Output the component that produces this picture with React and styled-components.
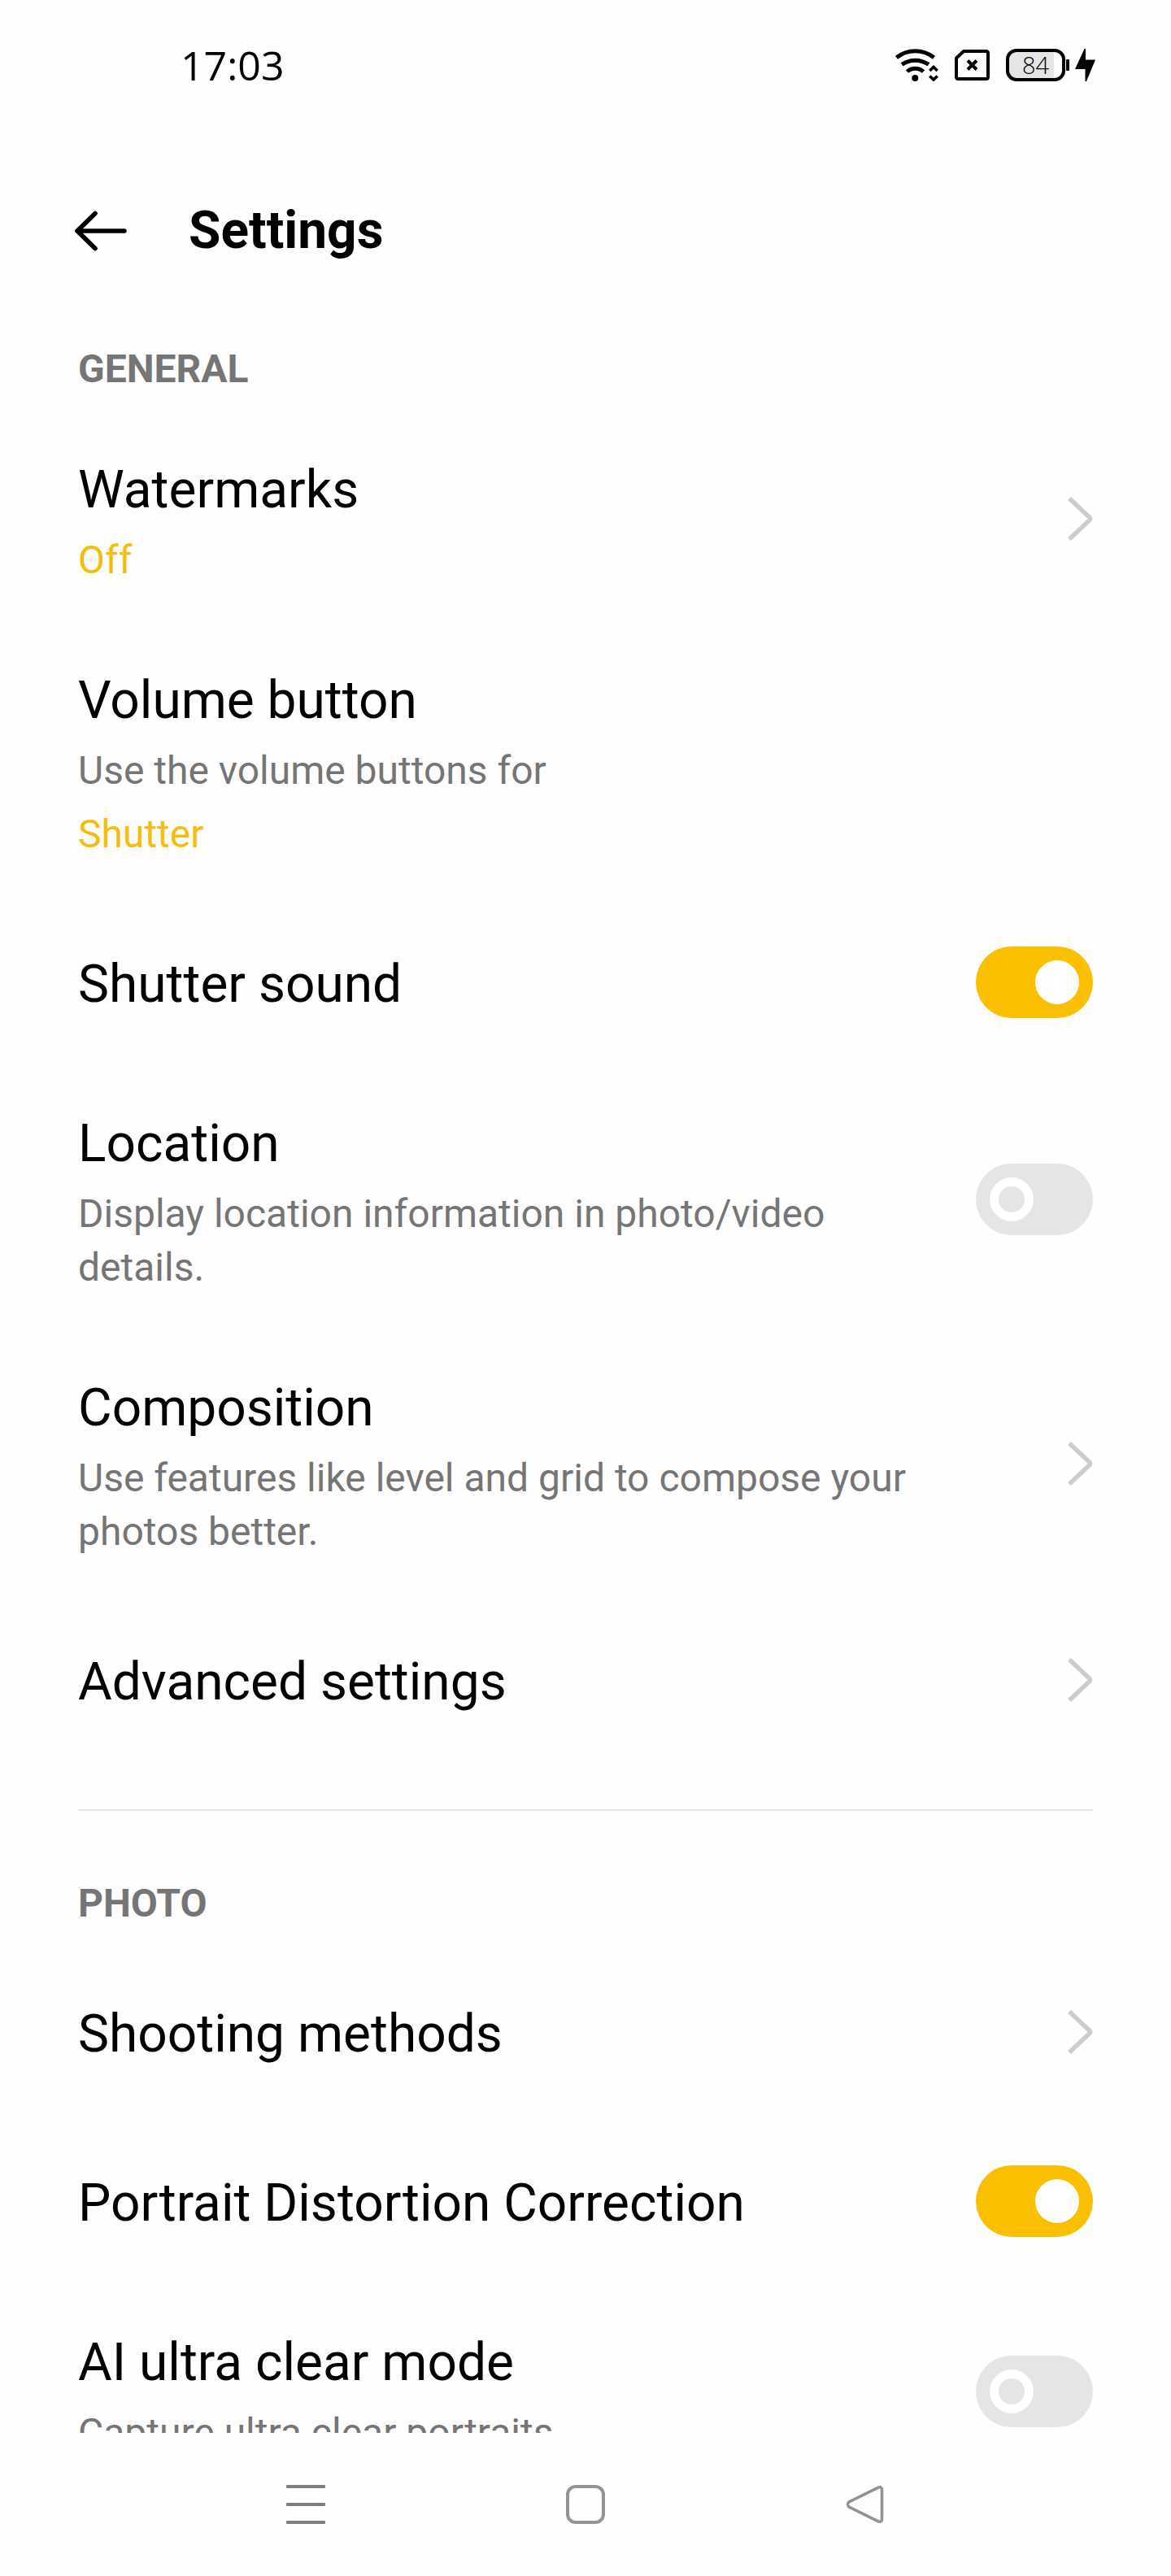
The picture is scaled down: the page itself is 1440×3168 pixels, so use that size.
import React, { useState } from "react"
import styled, { createGlobalStyle } from "styled-components"

const GlobalStyle = createGlobalStyle`
  *,
  *::before,
  *::after {
    box-sizing: border-box;
  }

  body {
    margin: 0;
    background: #fefefe;
    color: #000;
    font-family: Roboto, "Liberation Sans", sans-serif;
  }
`

const Screen = styled.div`
  display: flex;
  flex-direction: column;
  height: 100vh;
  overflow: hidden;
`

const StatusBar = styled.div`
  display: flex;
  flex: none;
  align-items: center;
  justify-content: space-between;
  height: 160px;
  padding: 0 93px 0 222px;
`

const Clock = styled.time`
  font-family: "Open Sans", "Noto Sans", sans-serif;
  font-size: 50px;
  line-height: 68px;
`

const StatusIcons = styled.div`
  display: flex;
  align-items: center;
  gap: 20px;

  svg {
    display: block;
  }
`

const Power = styled.div`
  display: flex;
  align-items: center;
  gap: 7px;
`

const Battery = styled.div`
  display: flex;
  align-items: center;
  gap: 1px;

  &::after {
    content: "";
    width: 4px;
    height: 14px;
    border-radius: 1px;
    background: #000;
  }
`

const BatteryCell = styled.div`
  width: 73px;
  height: 40px;
  border: 4px solid #000;
  border-radius: 13px;
  background: linear-gradient(to right, #e5e5e5 84%, transparent 84%);
  font-family: "Open Sans", "Noto Sans", sans-serif;
  font-size: 29px;
  font-weight: 300;
  line-height: 32px;
  text-align: center;
`

const Header = styled.header`
  display: flex;
  flex: none;
  align-items: center;
  gap: 76px;
  padding: 86px 92px 18px;
`

const IconButton = styled.button`
  display: flex;
  align-items: center;
  justify-content: center;
  padding: 0;
  border: 0;
  background: none;
  cursor: pointer;
`

const PageTitle = styled.h1`
  margin: 0;
  font-size: 64px;
  font-weight: 700;
  line-height: 76px;
`

const Content = styled.main`
  flex: 1;
  min-height: 0;
  padding: 0 96px;
  overflow: hidden;
`

const Section = styled.section`
  padding: 86px 0 52px;

  & + & {
    border-top: 2px solid #e5e5e5;
  }
`

const SectionTitle = styled.h2`
  margin: 0 0 29px;
  color: #757575;
  font-size: 48px;
  font-weight: 700;
  line-height: 56px;
  text-transform: uppercase;
`

const Row = styled.button`
  display: flex;
  align-items: center;
  justify-content: space-between;
  gap: 48px;
  width: 100%;
  min-height: 208px;
  padding: 54px 0;
  border: 0;
  background: none;
  color: inherit;
  font-family: inherit;
  text-align: left;
  cursor: pointer;
`

const RowText = styled.span`
  flex: 1;
  min-width: 0;
`

const RowTitle = styled.span`
  display: block;
  font-size: 64px;
  line-height: 76px;
`

const RowDetails = styled.span`
  display: flex;
  flex-direction: column;
  gap: 12px;
  margin: 15px 0 -6px;
  font-size: 48px;
  line-height: 66px;
`

const Description = styled.span`
  color: #757575;
`

const Value = styled.span`
  color: #f5bd0f;
`

const Control = styled.span`
  display: flex;
  flex: none;
  justify-content: flex-end;
  width: 144px;
  margin-bottom: 6px;
`

const Toggle = styled.input`
  display: flex;
  align-items: center;
  appearance: none;
  width: 144px;
  height: 88px;
  margin: 0;
  padding: 0 17px;
  border-radius: 44px;
  background: #e5e5e5;
  cursor: pointer;

  &::before {
    content: "";
    width: 54px;
    height: 54px;
    border: 11px solid #fff;
    border-radius: 50%;
  }

  &:checked {
    justify-content: flex-end;
    background: #fac000;
  }

  &:checked::before {
    background: #fff;
  }
`

const NavBar = styled.nav`
  display: flex;
  flex: none;
  height: 176px;
  padding: 0 204px;
`

const NavButton = styled(IconButton)`
  flex: 1;
`

const WifiIcon = () => (
  <svg width="53" height="40" viewBox="0 0 53 40" fill="none" stroke="#000" strokeWidth="5">
    <path d="M1.5 10.8A37 37 0 0 1 47.5 10.8" />
    <path d="M8 19.3A29 29 0 0 1 41 19.3" />
    <path d="M14.5 28A15 15 0 0 1 34.5 28" />
    <circle cx="24.3" cy="36" r="4" fill="#000" stroke="none" />
    <path d="M42.3 27L47 22.5L51.7 27M42.3 33.5L47 38L51.7 33.5" strokeWidth="3.6" />
  </svg>
)

const SimIcon = () => (
  <svg width="43" height="38" viewBox="0 0 43 38" fill="none" stroke="#000" strokeWidth="4">
    <path d="M11 2H38.5Q41 2 41 4.5V33.5Q41 36 38.5 36H4.5Q2 36 2 33.5V10.5Z" strokeLinejoin="round" />
    <path d="M16 13.5L27 24.5M27 13.5L16 24.5" />
  </svg>
)

const BoltIcon = () => (
  <svg width="25" height="40" viewBox="0 0 25 40">
    <path d="M11.5 0H13V13.5H25L14 40H12.5V25H0Z" />
  </svg>
)

const BackIcon = () => (
  <svg
    width="64"
    height="50"
    viewBox="0 0 64 50"
    fill="none"
    stroke="#000"
    strokeWidth="5.6"
    strokeLinecap="round"
    strokeLinejoin="round"
  >
    <path d="M61 25H3M25 3.5L3 25L25 46.5" />
  </svg>
)

const ChevronIcon = () => (
  <svg width="31" height="54" viewBox="0 0 31 54" fill="none" stroke="#ccc" strokeWidth="5.5">
    <path d="M2 2L26.5 25Q28.5 27 26.5 29L2 52" />
  </svg>
)

const MenuIcon = () => (
  <svg width="48" height="48" viewBox="0 0 48 48" fill="#7f7f7f">
    <rect width="48" height="4" rx="1" />
    <rect y="22" width="48" height="4" rx="1" />
    <rect y="44" width="48" height="4" rx="1" />
  </svg>
)

const HomeIcon = () => (
  <svg width="48" height="48" viewBox="0 0 48 48" fill="none" stroke="#939393" strokeWidth="4">
    <rect x="2" y="2" width="44" height="44" rx="10" />
  </svg>
)

const ReturnIcon = () => (
  <svg width="48" height="48" viewBox="0 0 48 48" fill="none" stroke="#939393" strokeWidth="3.6">
    <path d="M39.5 3.4L4 21Q0.8 24 4 27L39.5 44.6Q44.5 46.5 44.5 42V6Q44.5 1.5 39.5 3.4Z" />
  </svg>
)

const sections = [
  {
    title: "General",
    items: [
      { title: "Watermarks", value: "Off", link: true },
      { title: "Volume button", description: "Use the volume buttons for", value: "Shutter" },
      { title: "Shutter sound", toggle: true, on: true },
      {
        title: "Location",
        description: "Display location information in photo/video details.",
        toggle: true,
      },
      {
        title: "Composition",
        description: "Use features like level and grid to compose your photos better.",
        link: true,
      },
      { title: "Advanced settings", link: true },
    ],
  },
  {
    title: "Photo",
    items: [
      { title: "Shooting methods", link: true },
      { title: "Portrait Distortion Correction", toggle: true, on: true },
      { title: "AI ultra clear mode", description: "Capture ultra clear portraits", toggle: true },
    ],
  },
]

function SettingRow({ title, description, value, link, toggle, on = false }) {
  const [checked, setChecked] = useState(on)

  return (
    <Row as={toggle ? "label" : "button"}>
      <RowText>
        <RowTitle>{title}</RowTitle>
        {(description || value) && (
          <RowDetails>
            {description && <Description>{description}</Description>}
            {value && <Value>{value}</Value>}
          </RowDetails>
        )}
      </RowText>
      <Control>
        {link && <ChevronIcon />}
        {toggle && (
          <Toggle type="checkbox" checked={checked} onChange={() => setChecked(!checked)} />
        )}
      </Control>
    </Row>
  )
}

function App() {
  return (
    <Screen>
      <GlobalStyle />
      <StatusBar>
        <Clock>17:03</Clock>
        <StatusIcons>
          <WifiIcon />
          <SimIcon />
          <Power>
            <Battery>
              <BatteryCell>84</BatteryCell>
            </Battery>
            <BoltIcon />
          </Power>
        </StatusIcons>
      </StatusBar>
      <Header>
        <IconButton aria-label="Back">
          <BackIcon />
        </IconButton>
        <PageTitle>Settings</PageTitle>
      </Header>
      <Content>
        {sections.map(section => (
          <Section key={section.title}>
            <SectionTitle>{section.title}</SectionTitle>
            {section.items.map(item => (
              <SettingRow key={item.title} {...item} />
            ))}
          </Section>
        ))}
      </Content>
      <NavBar>
        <NavButton aria-label="Recent apps">
          <MenuIcon />
        </NavButton>
        <NavButton aria-label="Home">
          <HomeIcon />
        </NavButton>
        <NavButton aria-label="Return">
          <ReturnIcon />
        </NavButton>
      </NavBar>
    </Screen>
  )
}

export default App
